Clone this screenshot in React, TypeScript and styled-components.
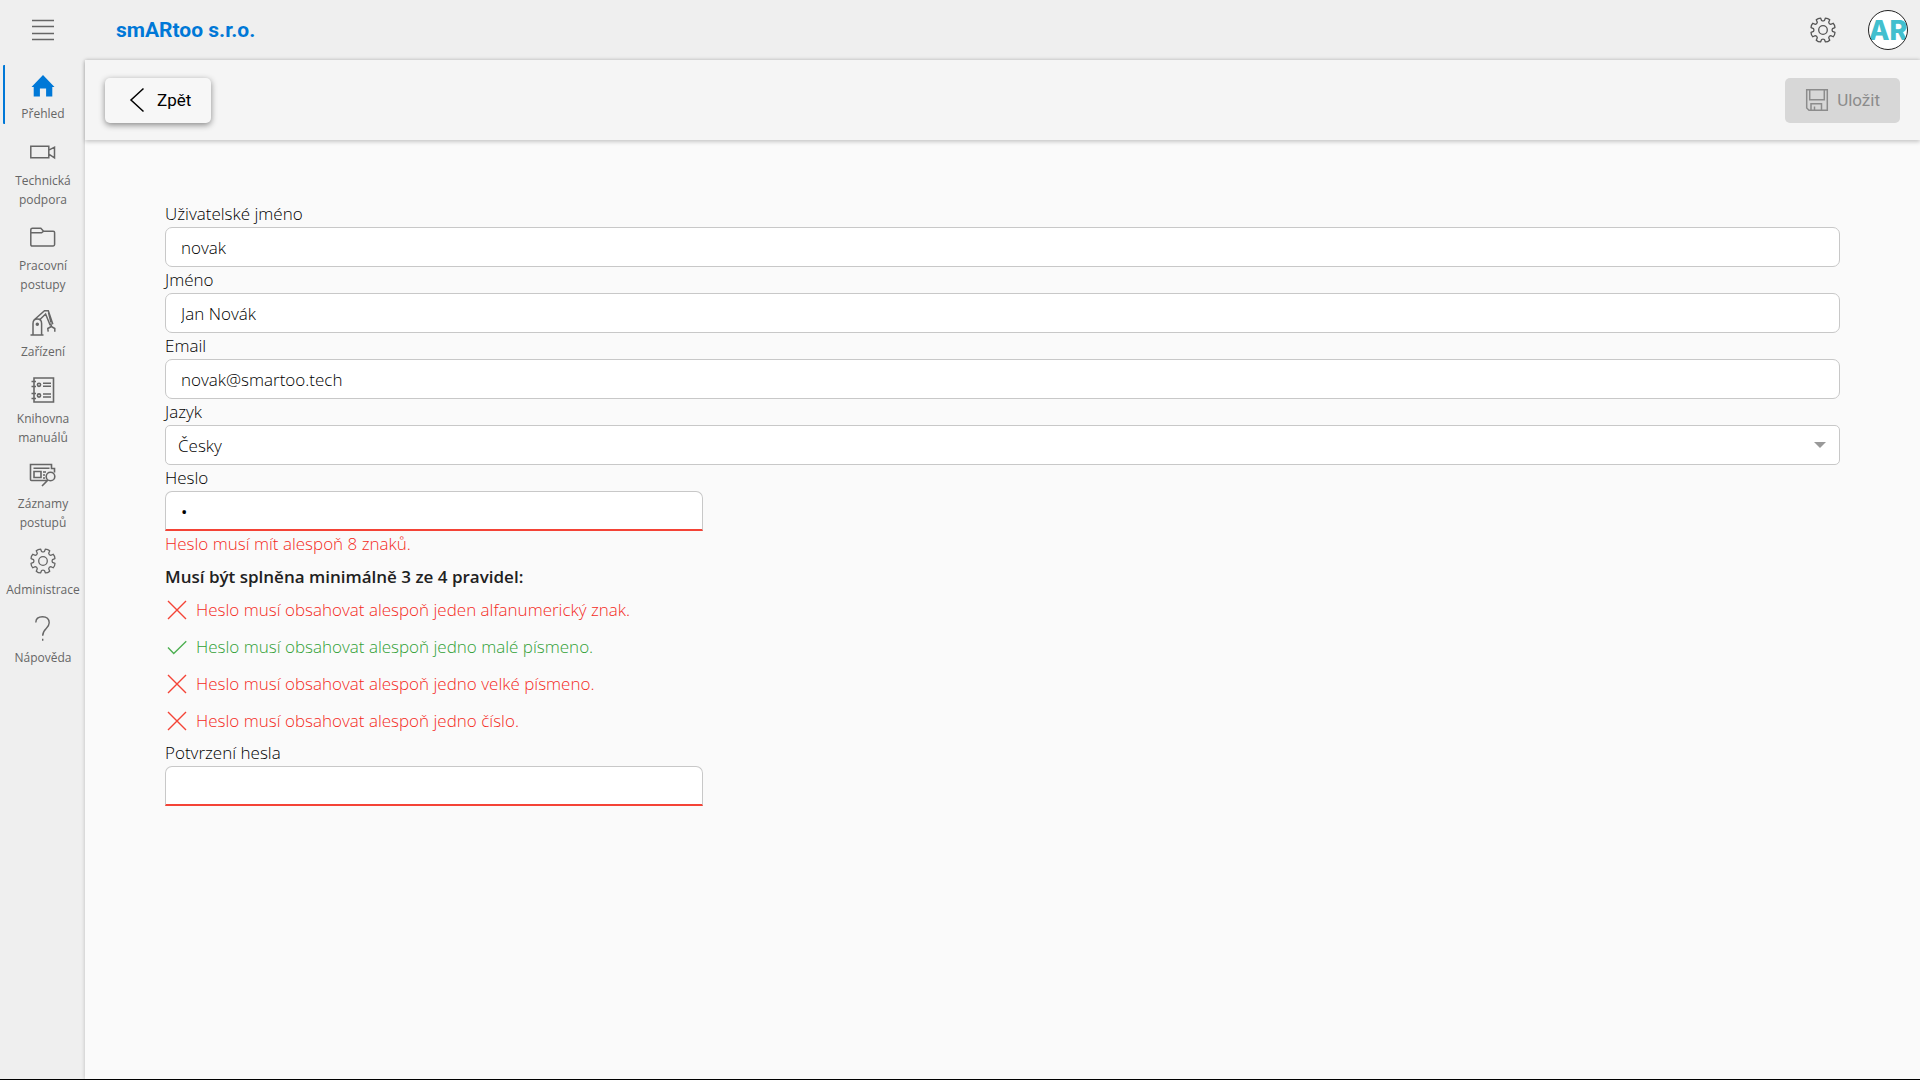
import React, { useState } from "react";
import styled, { createGlobalStyle, css } from "styled-components";

const GlobalStyle = createGlobalStyle`
  *, *::before, *::after { box-sizing: border-box; }
  body {
    margin: 0;
    background: #fafafa;
    color: #000;
    font: 300 17px/26px "Open Sans", "Noto Sans", sans-serif;
  }
`;

const Shell = styled.div`
  min-height: 100vh;
  display: grid;
  grid-template: 60px 1fr / 85px minmax(0, 1fr);
  background: #efefef;
  border-bottom: 1px solid #000;
`;

const MenuButton = styled.button`
  display: grid;
  place-items: center;
  padding: 0;
  border: 0;
  background: none;
  color: #666;
`;

const TopBar = styled.header`
  display: flex;
  align-items: center;
  gap: 31px;
  padding: 0 12px 0 31px;
`;

const Brand = styled.h1`
  flex: 1;
  margin: 0;
  color: #0078d7;
  font: 700 21px/28px Roboto, sans-serif;
`;

const IconButton = styled.button`
  display: grid;
  place-items: center;
  padding: 0;
  border: 0;
  background: none;
  color: #555;
`;

const Side = styled.nav`
  display: flex;
  flex-direction: column;
  gap: 9px;
  padding-top: 5px;
`;

const SideLink = styled.a<{ $active?: boolean }>`
  display: flex;
  flex-direction: column;
  align-items: center;
  justify-content: center;
  min-height: 59px;
  margin-left: 3px;
  padding: 5px 4px 0 0;
  border-left: 2px solid ${(p) => (p.$active ? "#0078d7" : "transparent")};
  border-radius: 1px;
  color: #666;
  font-size: 12px;
  font-weight: 400;
  line-height: 19px;
  text-align: center;
  text-decoration: none;
  white-space: pre-line;

  svg {
    flex: none;
    margin-bottom: 5px;
    color: ${(p) => (p.$active ? "#0078d7" : "#666")};
  }
`;

const Main = styled.main`
  min-width: 0;
  background: #fafafa;
  box-shadow: 0 0 4px rgba(0, 0, 0, 0.22);
`;

const Toolbar = styled.div`
  display: flex;
  align-items: center;
  justify-content: space-between;
  height: 80px;
  padding: 0 20px;
  background: #f5f5f5;
  box-shadow: 0 2px 4px rgba(0, 0, 0, 0.2);
`;

const ToolButton = styled.button`
  display: flex;
  align-items: center;
  gap: 8px;
  height: 45px;
  padding: 0 20px;
  border: 0;
  border-radius: 5px;
  background: #f7f7f7;
  color: #000;
  font: 400 17px/24px Roboto, sans-serif;
  box-shadow: 0 2px 6px rgba(0, 0, 0, 0.45);

  &:disabled {
    background: #d7d7d7;
    color: #8c8c8c;
    box-shadow: none;
  }
`;

const Form = styled.form`
  display: flex;
  flex-direction: column;
  padding: 61px 80px 40px;
`;

const Field = styled.div<{ $narrow?: boolean }>`
  display: flex;
  flex-direction: column;
  width: 100%;
  max-width: ${(p) => (p.$narrow ? "538px" : "none")};
`;

const control = css`
  width: 100%;
  height: 40px;
  border: 1px solid #c8c8c8;
  border-radius: 7px;
  background: #fff;
  color: #000;
  font: inherit;
  outline: none;
`;

const Input = styled.input<{ $invalid?: boolean }>`
  ${control}
  padding: 1px 15px 0;
  ${(p) =>
    p.$invalid &&
    css`
      padding-top: 2px;
      border-bottom: 2px solid #f44336;
      border-radius: 7px 7px 0 0;
      font-weight: 400;
    `}
`;

const SelectBox = styled.div`
  display: grid;
  align-items: center;

  > * {
    grid-area: 1 / 1;
  }

  svg {
    justify-self: end;
    margin-right: 14px;
    pointer-events: none;
  }
`;

const Select = styled.select`
  ${control}
  appearance: none;
  padding: 1px 12px 0;
  border-radius: 5px;
`;

const ErrorText = styled.p`
  margin: 0 0 7px;
  color: #f42a1c;
`;

const RulesTitle = styled.p`
  margin: 0;
  color: #212121;
  font-weight: 600;
`;

const Rules = styled.ul`
  margin: 0;
  padding: 1px 0;
  list-style: none;
`;

const Rule = styled.li<{ $ok: boolean }>`
  display: flex;
  align-items: center;
  gap: 7px;
  height: 37px;
  color: ${(p) => (p.$ok ? "#30a035" : "#f42a1c")};

  svg {
    color: ${(p) => (p.$ok ? "#4caf50" : "#f44336")};
  }
`;

type DrawProps = { children: React.ReactNode; size?: number; width?: number };

const Draw = ({ children, size = 28, width = 1.3 }: DrawProps) => (
  <svg width={size} height={size} viewBox="0 0 28 28" fill="none" stroke="currentColor" strokeWidth={width} aria-hidden="true">
    {children}
  </svg>
);

const gearOutline = (() => {
  const at = (deg: number, r: number) => {
    const a = (deg * Math.PI) / 180;
    return `${(14 + r * Math.sin(a)).toFixed(2)} ${(14 - r * Math.cos(a)).toFixed(2)}`;
  };
  let d = "";
  for (let i = 0; i < 8; i++) {
    const c = i * 45 + 22.5;
    d += `${i ? "L" : "M"}${at(c - 14, 9.6)}L${at(c - 11, 12.2)}Q${at(c, 12.9)} ${at(c + 11, 12.2)}L${at(c + 14, 9.6)}Q${at(c + 22.5, 8.6)} ${at(c + 31, 9.6)}`;
  }
  return d + "Z";
})();

const Gear = () => (
  <Draw>
    <path d={gearOutline} strokeLinejoin="round" />
    <circle cx="14" cy="14" r="4.3" />
  </Draw>
);

const Home = () => (
  <Draw>
    <path d="M14 4 2.500 16h2.200v9.500h6.200v-8h6.200v8h6.200V16h2.200z" fill="currentColor" stroke="none" />
  </Draw>
);

const Camera = () => (
  <Draw width={1.5}>
    <path d="M1.800 8.200h18v11.600h-18zM19.800 12.200l5.700-3v10.600l-5.700-3.600" />
  </Draw>
);

const Folder = () => (
  <Draw width={1.5}>
    <path d="M1.800 10V6.800q0-1.600 1.600-1.600h8.400l2.800 3h9.600q1.400 0 1.400 1.400v12q0 1.400-1.400 1.400H3.200q-1.400 0-1.400-1.400zM2 9.800h10.600l2-1.600" />
  </Draw>
);

const Robot = () => (
  <Draw width={1.5}>
    <path d="M1.500 26h13M4 26V14.500Q4 10 8.300 10t4.300 4.500V26M5 11 15.500 1.800h3.800l4.300 12.700-2.700 1-4.300-10.500-6.200 6M22.300 15v2.500M22.300 17.500l-3.500 2 .4 3.200M22.300 17.500l3.500 2v3.200M19.500 3.500l2.500 10" />
    <circle cx="8.300" cy="15.300" r="1" fill="currentColor" />
  </Draw>
);

const Notebook = () => (
  <Draw width={1.6}>
    <path d="M5 2h19.500v24H5zM2.500 5.500H7M2.500 10.500H7M2.500 17.500H7M2.500 22.500H7M14 7.300h8M14 10.300h8M14 18h8M14 21h8" />
    <circle cx="10" cy="8.800" r="1.600" />
    <circle cx="10" cy="19.500" r="1.600" />
  </Draw>
);

const Records = () => (
  <Draw width={1.6}>
    <path d="M19 19.500H2.500q-1 0-1-1V3.500h21v4h3v4M4.500 7.300h16M5 10.500h7v6H5zM14 11h3M14 14h2M14 17h2M18.500 19.500 13 25" />
    <circle cx="21.500" cy="15.500" r="4.300" />
  </Draw>
);

const Question = () => (
  <Draw width={1.4}>
    <path d="M6.800 7.500Q7 1.800 13.500 1.800t6.700 6c0 6-6.500 5.500-6.500 13M13.700 23.800v2" />
  </Draw>
);

const Cross = () => (
  <Draw size={24} width={1.6}>
    <path d="M3.500 3.500l21 21M24.500 3.500l-21 21" />
  </Draw>
);

const Tick = () => (
  <Draw size={24} width={1.6}>
    <path d="M3.500 14.500l6.700 7L24.800 7.200" />
  </Draw>
);

const NAV = [
  { label: "Přehled", Icon: Home },
  { label: "Technická\npodpora", Icon: Camera },
  { label: "Pracovní\npostupy", Icon: Folder },
  { label: "Zařízení", Icon: Robot },
  { label: "Knihovna\nmanuálů", Icon: Notebook },
  { label: "Záznamy\npostupů", Icon: Records },
  { label: "Administrace", Icon: Gear },
  { label: "Nápověda", Icon: Question },
];

const TEXT_FIELDS = [
  { id: "username", label: "Uživatelské jméno", value: "novak", type: "text" },
  { id: "name", label: "Jméno", value: "Jan Novák", type: "text" },
  { id: "email", label: "Email", value: "novak@smartoo.tech", type: "email" },
];

const RULES = [
  { text: "Heslo musí obsahovat alespoň jeden alfanumerický znak.", test: /[^A-Za-z0-9]/ },
  { text: "Heslo musí obsahovat alespoň jedno malé písmeno.", test: /[a-z]/ },
  { text: "Heslo musí obsahovat alespoň jedno velké písmeno.", test: /[A-Z]/ },
  { text: "Heslo musí obsahovat alespoň jedno číslo.", test: /[0-9]/ },
];

export default function App() {
  const [password, setPassword] = useState("a");

  return (
    <>
      <GlobalStyle />
      <Shell>
        <MenuButton type="button" aria-label="Menu">
          <svg width="24" height="24" viewBox="0 0 24 24" stroke="currentColor" strokeWidth="1.500" aria-hidden="true">
            <path d="M1 2.500h22M1 8.500h22M1 15.500h22M1 21.500h22" />
          </svg>
        </MenuButton>
        <TopBar>
          <Brand>smARtoo s.r.o.</Brand>
          <IconButton type="button" aria-label="Nastavení">
            <Gear />
          </IconButton>
          <IconButton type="button" aria-label="Účet">
            <svg width="40" height="40" viewBox="0 0 40 40" aria-hidden="true">
              <clipPath id="avatar">
                <circle cx="20" cy="20" r="19.300" />
              </clipPath>
              <circle cx="20" cy="20" r="19.500" fill="#fff" />
              <text x="20" y="30" clipPath="url(#avatar)" textAnchor="middle" fill="#42bfce" fontFamily="Inter, sans-serif" fontWeight="800" fontSize="27">
                AR
              </text>
              <circle cx="20" cy="20" r="19.500" fill="none" stroke="#222" />
            </svg>
          </IconButton>
        </TopBar>
        <Side>
          {NAV.map(({ label, Icon }, i) => (
            <SideLink key={label} href="#" $active={i === 0}>
              <Icon />
              {label}
            </SideLink>
          ))}
        </Side>
        <Main>
          <Toolbar>
            <ToolButton type="button">
              <svg width="24" height="26" viewBox="0 0 24 26" fill="none" stroke="currentColor" strokeWidth="1.500" aria-hidden="true">
                <path d="M18.500 1.500 6 13l12.500 11.500" />
              </svg>
              Zpět
            </ToolButton>
            <ToolButton type="submit" form="profile" disabled>
              <svg width="24" height="24" viewBox="0 0 24 24" fill="none" stroke="currentColor" strokeWidth="1.500" aria-hidden="true">
                <path d="M1.700 1.700h20.600v20.600H4l-2.300-2.300zM4.700 1.700v10h14.600v-10M6 22v-6.300h10.500V22M9.500 22v-3.500" />
              </svg>
              Uložit
            </ToolButton>
          </Toolbar>
          <Form id="profile">
            {TEXT_FIELDS.map((f) => (
              <Field key={f.id}>
                <label htmlFor={f.id}>{f.label}</label>
                <Input id={f.id} type={f.type} defaultValue={f.value} />
              </Field>
            ))}
            <Field>
              <label htmlFor="language">Jazyk</label>
              <SelectBox>
                <Select id="language" defaultValue="cs">
                  <option value="cs">Česky</option>
                </Select>
                <svg width="12" height="6" viewBox="0 0 12 6" aria-hidden="true">
                  <path d="M0 0h12L6 6z" fill="#999" />
                </svg>
              </SelectBox>
            </Field>
            <Field $narrow>
              <label htmlFor="password">Heslo</label>
              <Input id="password" type="password" $invalid value={password} onChange={(e) => setPassword(e.target.value)} />
            </Field>
            <ErrorText>Heslo musí mít alespoň 8 znaků.</ErrorText>
            <RulesTitle>Musí být splněna minimálně 3 ze 4 pravidel:</RulesTitle>
            <Rules>
              {RULES.map(({ text, test }) => {
                const ok = test.test(password);
                return (
                  <Rule key={text} $ok={ok}>
                    {ok ? <Tick /> : <Cross />}
                    {text}
                  </Rule>
                );
              })}
            </Rules>
            <Field $narrow>
              <label htmlFor="confirm">Potvrzení hesla</label>
              <Input id="confirm" type="password" $invalid />
            </Field>
          </Form>
        </Main>
      </Shell>
    </>
  );
}
